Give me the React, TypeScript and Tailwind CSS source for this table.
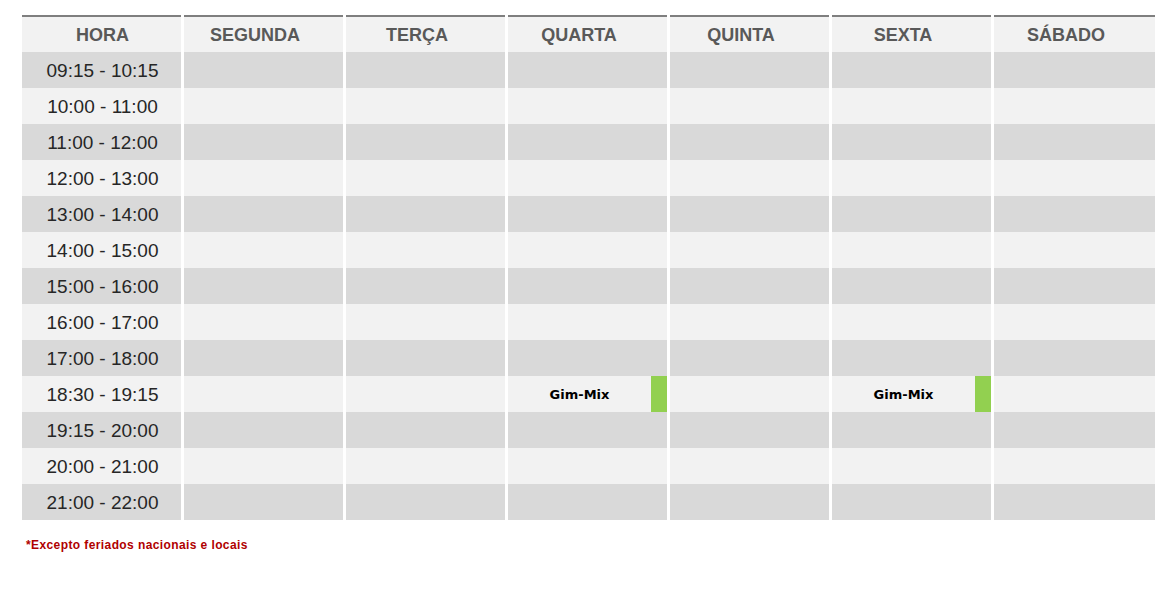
import React from 'react'

const days = ['SEGUNDA', 'TERÇA', 'QUARTA', 'QUINTA', 'SEXTA', 'SÁBADO']

const hours = [
  '09:15 - 10:15',
  '10:00 - 11:00',
  '11:00 - 12:00',
  '12:00 - 13:00',
  '13:00 - 14:00',
  '14:00 - 15:00',
  '15:00 - 16:00',
  '16:00 - 17:00',
  '17:00 - 18:00',
  '18:30 - 19:15',
  '19:15 - 20:00',
  '20:00 - 21:00',
  '21:00 - 22:00',
]

// classes by [hour index]-[day index]
const classes: Record<string, string> = {
  '9-2': 'Gim-Mix',
  '9-4': 'Gim-Mix',
}

export default function App() {
  return (
    <div className="w-[1176px] h-[606px] bg-white pt-[15px] pl-[22px]" style={{ fontFamily: '"Liberation Sans", Arial, sans-serif' }}>
      <div className="w-[1133px] grid grid-cols-[159px_159px_159px_159px_159px_159px_161px] gap-x-[3px]">
        {/* header */}
        <div className="h-[37px] border-t-2 border-[#7f7f7f] bg-[#f2f2f2] flex items-center justify-center pl-[2px] pt-[2px] text-[18px] font-bold text-[#595959]">
          HORA
        </div>
        {days.map((d) => (
          <div
            key={d}
            className="h-[37px] border-t-2 border-[#7f7f7f] bg-[#f2f2f2] flex items-center justify-center pr-[17px] pt-[2px] text-[18px] font-bold text-[#595959]"
          >
            {d}
          </div>
        ))}

        {/* body */}
        {hours.map((h, i) => {
          const bg = i % 2 === 0 ? 'bg-[#d9d9d9]' : 'bg-[#f2f2f2]'
          return (
            <React.Fragment key={h}>
              <div className={`h-[36px] ${bg} flex items-center justify-center pl-[2px] pt-[2px] text-[19px] text-[#262626]`}>{h}</div>
              {days.map((d, j) => {
                const c = classes[`${i}-${j}`]
                return (
                  <div key={d} className={`h-[36px] ${bg} flex`}>
                    {c && (
                      <>
                        <div
                          className="flex-1 flex items-center justify-center pt-[1px] text-[13px] font-bold text-black"
                          style={{ fontFamily: '"DejaVu Sans", sans-serif' }}
                        >
                          {c}
                        </div>
                        <div className="w-[16px] bg-[#92d050]" />
                      </>
                    )}
                  </div>
                )
              })}
            </React.Fragment>
          )
        })}
      </div>

      <p className="mt-[16px] ml-[4px] text-[12px] font-bold tracking-[0.4px] text-[#b00000]">*Excepto feriados nacionais e locais</p>
    </div>
  )
}
